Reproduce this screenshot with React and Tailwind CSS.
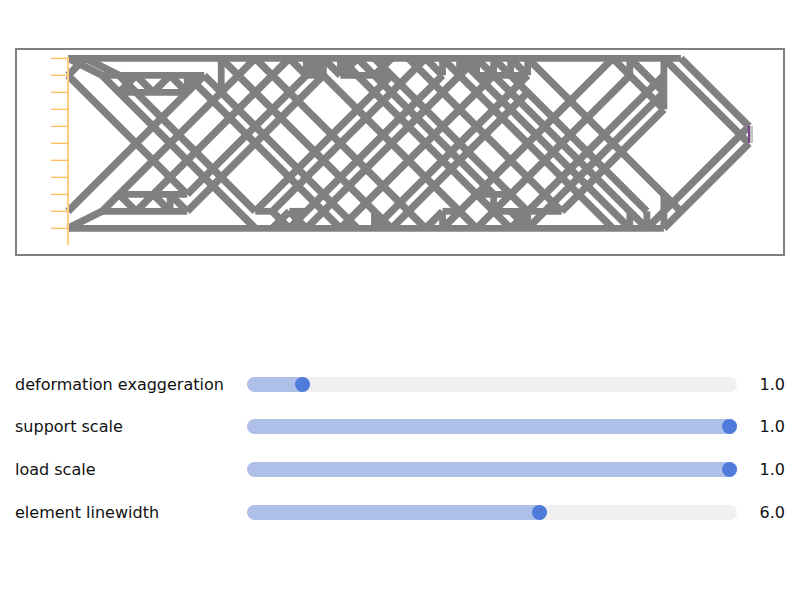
import React from 'react';

// truss members on the node grid, [i1, j1, i2, j2]
const members = [
  // chords
  [0, 0, 36, 0], [0, 10, 35, 10],
  // horizontals
  [2, 1, 8, 1], [3, 2, 7, 2], [2, 9, 7, 9], [3, 8, 7, 8], [11, 9, 12, 9], [13, 9, 14, 9],
  [14, 1, 15, 1], [16, 1, 19, 1], [24, 1, 27, 1], [22, 9, 23, 9], [25, 9, 29, 9], [24, 8, 26, 8],
  // verticals
  [7, 1, 7, 2], [9, 0, 9, 2], [6, 8, 6, 9], [14, 0, 14, 1], [15, 0, 15, 1], [16, 0, 16, 1],
  [22, 0, 22, 1], [23, 0, 23, 1], [24, 0, 24, 1], [25, 0, 25, 1], [26, 0, 26, 1], [27, 0, 27, 1],
  [18, 9, 18, 10], [22, 9, 22, 10], [25, 8, 25, 9], [27, 9, 27, 10],
  [33, 0, 33, 1], [35, 0, 35, 3], [33, 9, 33, 10], [34, 9, 34, 10], [35, 8, 35, 10],
  // left end
  [0, 0, 2, 1], [1, 0, 3, 1], [0, 1, 1, 0], [0, 10, 2, 9],
  [3, 2, 4, 1], [5, 2, 6, 1], [3, 8, 4, 9], [5, 8, 6, 9], [6, 8, 7, 9],
  // falling diagonals
  [0, 1, 7, 8], [2, 1, 11, 10], [3, 1, 11, 9], [4, 1, 5, 2], [6, 1, 7, 2], [12, 9, 13, 10],
  [13, 9, 14, 10], [7, 1, 16, 10], [8, 1, 17, 10], [9, 0, 19, 10], [11, 0, 21, 10], [13, 0, 14, 1],
  [14, 0, 24, 10], [15, 0, 16, 1], [16, 0, 26, 10], [17, 0, 25, 8], [26, 9, 27, 10], [18, 0, 27, 9],
  [20, 0, 29, 9], [21, 0, 22, 1], [22, 0, 32, 10], [23, 0, 33, 10], [24, 0, 34, 10], [25, 0, 34, 9],
  [26, 0, 27, 1], [27, 0, 36, 9], [32, 0, 35, 3], [33, 0, 35, 2], [35, 0, 40, 5], [36, 0, 40, 4],
  // rising diagonals
  [0, 9, 8, 1], [2, 9, 11, 0], [4, 9, 13, 0], [7, 8, 15, 0], [7, 9, 15, 1], [11, 9, 19, 1],
  [12, 9, 21, 0], [12, 10, 13, 9], [13, 10, 22, 1], [14, 10, 24, 0], [16, 10, 25, 1],
  [18, 10, 27, 1], [19, 10, 27, 2], [21, 10, 22, 9], [22, 10, 32, 0], [24, 10, 33, 1],
  [16, 1, 17, 0], [18, 1, 19, 0], [26, 10, 35, 1], [27, 10, 35, 2], [29, 9, 35, 3],
  [34, 10, 40, 4], [35, 10, 40, 5],
];

const px = (i) => 68 + 17.025 * i;
const py = (j) => 58.3 + 17 * j;

const sliders = [
  { label: 'deformation exaggeration', value: '1.0', pct: 10 },
  { label: 'support scale', value: '1.0', pct: 100 },
  { label: 'load scale', value: '1.0', pct: 100 },
  { label: 'element linewidth', value: '6.0', pct: 60 },
];

const Truss = () => (
  <svg width="766" height="204" viewBox="17 50 766 204" className="block">
    {members.map(([a, b, c, d], k) => (
      <line
        key={k}
        x1={px(a)}
        y1={py(b)}
        x2={px(c)}
        y2={py(d)}
        stroke="#808080"
        strokeWidth={a === c || b === d ? 6.8 : 7.4}
      />
    ))}
    <line x1="68" y1="57" x2="68" y2="245" stroke="#ffcf80" strokeWidth="2" />
    {[0, 1, 2, 3, 4, 5, 6, 7, 8, 9, 10].map((j) => (
      <line key={j} x1="51" y1={py(j)} x2="68" y2={py(j)} stroke="#ffb84d" strokeWidth="1.2" />
    ))}
    <rect x="750" y="126" width="3" height="17" fill="#c4c4c4" />
    <rect x="748" y="126" width="2" height="17" fill="#7f3f8f" />
  </svg>
);

const Slider = ({ label, value, pct }) => (
  <div className="flex h-[42.67px] items-center">
    <div className="w-[247px] pt-[1px] pl-[15px] text-[16px] whitespace-nowrap text-[#111]">{label}</div>
    <div className="relative h-[15px] w-[490px] rounded-full bg-[#f0f0f0]">
      <div className="h-full rounded-full bg-[#aec0e8]" style={{ width: `calc(${pct / 100} * (100% - 15px) + 15px)` }} />
      <div
        className="absolute top-0 h-[15px] w-[15px] rounded-full bg-[#4f7bdb]"
        style={{ left: `calc(${pct / 100} * (100% - 15px))` }}
      />
    </div>
    <div className="w-[48px] pt-[1px] text-right text-[16px] text-[#111]">{value}</div>
  </div>
);

export default function App() {
  return (
    <div className="h-[600px] w-[800px] bg-white pt-[48px] font-['DejaVu_Sans',sans-serif]">
      <div className="ml-[15px] h-[208px] w-[770px] border-2 border-[#808080]">
        <Truss />
      </div>
      <div className="mt-[107px]">
        {sliders.map((s) => (
          <Slider key={s.label} {...s} />
        ))}
      </div>
    </div>
  );
}
